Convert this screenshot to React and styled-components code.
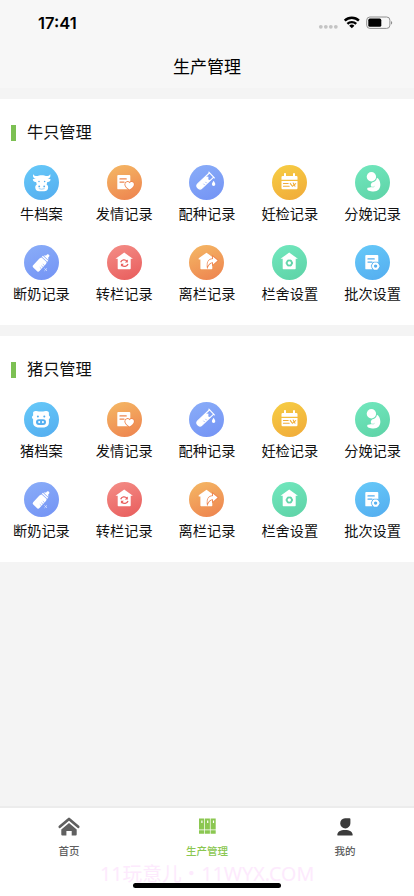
import React from "react";
import styled, { createGlobalStyle } from "styled-components";

const GlobalStyle = createGlobalStyle`
  * { box-sizing: border-box; }
  body { margin: 0; background: #f4f4f4; font-family: "Liberation Sans", "Noto Sans CJK SC", sans-serif; color: #111; }
`;

const Screen = styled.div`
  width: 414px;
  height: 896px;
  display: flex;
  flex-direction: column;
  overflow: hidden;
  background: #f4f4f4;
`;

const Header = styled.header`
  height: 88px;
  flex: none;
  background: #f7f7f7;
`;

const StatusBar = styled.div`
  height: 44px;
  padding: 2px 21px 0 38px;
  display: flex;
  align-items: center;
  justify-content: space-between;
`;

const Clock = styled.span`
  font: 600 16.5px/20px Inter, sans-serif;
  letter-spacing: 0;
  color: #000;
`;

const NavTitle = styled.h1`
  margin: 0;
  height: 44px;
  text-align: center;
  font: 400 17px/43px "Noto Sans CJK SC", sans-serif;
  color: #000;
`;

const Content = styled.main`
  flex: 1;
  padding-top: 11px;
  display: flex;
  flex-direction: column;
  gap: 11px;
`;

const Panel = styled.section`
  height: 226px;
  background: #fff;
  padding-top: 22px;
`;

const PanelTitle = styled.h2`
  margin: 0 0 21px;
  padding-left: 11px;
  height: 23px;
  display: flex;
  align-items: center;
  gap: 11px;
  font: 400 16.2px/23px "Noto Sans CJK SC", sans-serif;
  color: #111;
  &::before {
    content: "";
    width: 5px;
    height: 16px;
    background: #7cc053;
  }
`;

const PanelTitleText = styled.span`
  padding-bottom: 2px;
`;

const Grid = styled.div`
  display: grid;
  grid-template-columns: repeat(5, 1fr);
  grid-auto-rows: 80px;
`;

const Entry = styled.div`
  display: flex;
  flex-direction: column;
  align-items: center;
  gap: 2px;
`;

const Disc = styled.svg`
  width: 35px;
  height: 35px;
  display: block;
`;

const EntryLabel = styled.span`
  font: 400 14.2px/22px "Noto Sans CJK SC", sans-serif;
  white-space: nowrap;
  color: #111;
`;

const TabBar = styled.nav`
  position: relative;
  height: 90px;
  flex: none;
  display: grid;
  grid-template-columns: repeat(3, 1fr);
  background: #fff;
  border-top: 2px solid #ececec;
`;

const Tab = styled.div`
  display: flex;
  flex-direction: column;
  align-items: center;
  padding-top: 7px;
  gap: 6px;
  color: ${(p) => (p.$active ? "#8bc751" : "#606060")};
`;

const TabIcon = styled.svg`
  width: 24px;
  height: 22px;
  display: block;
`;

const TabLabel = styled.span`
  font: 500 10.5px/16px "Noto Sans CJK SC", sans-serif;
`;

const Watermark = styled.div`
  position: absolute;
  left: 100px;
  top: 53px;
  font: 400 19.7px/26px "Noto Sans", "Noto Sans CJK SC", sans-serif;
  white-space: nowrap;
  color: #fdeafd;
`;

const HomeIndicator = styled.div`
  position: absolute;
  left: 133px;
  bottom: 8px;
  width: 148px;
  height: 5px;
  border-radius: 3px;
  background: #000;
`;

const tones = {
  sky: ["#65c7f8", "#55aff0"],
  orange: ["#f4b463", "#ee8650"],
  violet: ["#88abf8", "#7595f5"],
  amber: ["#f6cb43", "#f1ad3a"],
  mint: ["#70e6bc", "#5fd4a8"],
  red: ["#f38a84", "#e9605f"],
};

const Sheet = ({ tone }) => (
  <>
    <path d="M11.2 10h11.2q.9 0 .9.9v13.4H11.2q-.9 0-.9-.9V10.9q0-.9.9-.9z" />
    <path d="M13 13.9h6.2M13 17.1h4" stroke={tone} strokeWidth="1.3" strokeLinecap="round" />
  </>
);

const House = () => (
  <path d="M17.2 7.6l8.7 6.2h-2.2v9.8q0 .7-.7.7H11.4q-.7 0-.7-.7v-9.8H8.5z" />
);

const glyphs = {
  cow: (t) => (
    <>
      <path d="M9.2 8.9c-.7 3 .3 4.4 2.6 4.5L8.8 14.2c.2 2 1.5 3 3.3 2.7l.7 2.6c-1.4.8-1.7 2.2-1.5 3.5.3 2.2 2 3.4 4 3.3h4.9c2 0 3.6-1.1 3.9-3.3.2-1.3-.1-2.7-1.5-3.5l.7-2.6c1.8.3 3.1-.7 3.3-2.7l-3-.8c2.3-.1 3.3-1.5 2.6-4.5-.5 1.8-1.8 2.1-4.4 2.2-.8-.7-2-.9-4.1-.9s-3.3.2-4.1.9c-2.6-.1-3.9-.4-4.4-2.2z" />
      <g fill={t}><circle cx="15" cy="16.6" r=".75" /><circle cx="20.6" cy="16.6" r=".75" /><circle cx="15.2" cy="21.4" r=".9" /><circle cx="20.2" cy="21.4" r=".9" /></g>
      <path d="M14.8 23.6q2.9 1.2 5.8 0" stroke={t} strokeWidth=".55" fill="none" />
    </>
  ),
  pig: (t) => (
    <>
      <path d="M10.6 9.2c2-.3 3.4 0 4.2.3h4.4c.8-.3 2.2-.6 4.2-.3 1.2.2 1.6.8 1.5 2v2.2c1.5.5 1.5 3.2 0 3.6v3.4c0 3.9-2.9 5.2-7.9 5.2s-7.9-1.3-7.9-5.2V17c-1.5-.4-1.5-3.1 0-3.6v-2.2c-.1-1.2.3-1.8 1.5-2z" />
      <g fill={t}><circle cx="13.9" cy="14.4" r="1" /><circle cx="20.3" cy="14.4" r="1" /><rect x="12" y="17.2" width="10" height="5.8" rx="2.9" /></g>
      <g fill="#fff"><circle cx="15.2" cy="20.1" r="1.05" /><circle cx="18.9" cy="20.1" r="1.05" /></g>
    </>
  ),
  heart: (t) => (
    <>
      <Sheet tone={t} />
      <path d="M22.6 24.5c-2.2-1.5-4.3-3.1-4.3-5.1 0-2.8 3.2-3 4.3-1.2 1.1-1.8 4.3-1.6 4.3 1.2 0 2-2.1 3.6-4.3 5.1z" fill={t} stroke={t} strokeWidth="1.8" />
      <path d="M22.6 24.5c-2.2-1.5-4.3-3.1-4.3-5.1 0-2.8 3.2-3 4.3-1.2 1.1-1.8 4.3-1.6 4.3 1.2 0 2-2.1 3.6-4.3 5.1z" />
    </>
  ),
  tube: (t) => (
    <>
      <g transform="translate(16.1 16.1) rotate(47)">
        <path d="M-4-8.9h8M-3-8.6V7a3 3 0 0 0 6 0V-8.6" fill="none" stroke="#fff" strokeWidth="1.15" strokeLinecap="round" />
        <path d="M-3-3.7l2.2-1.7 1.8 2 2-1.2V7a3 3 0 0 1-6 0z" />
        <path d="M.8.3h1.7M.8 3h1.7" stroke={t} strokeWidth=".6" />
      </g>
      <path d="M24.6 15.8c1 1.6 1.7 2.5 1.7 3.5a1.7 1.7 0 0 1-3.4 0c0-1 .7-1.9 1.7-3.5z" />
    </>
  ),
  calendar: (t) => (
    <>
      <path d="M13 8.1c.6 0 1 .4 1 1v1.8h7V9.1a1 1 0 0 1 2 0v1.8h1.3q1.2 0 1.2 1.2v2.7h-16v-2.7q0-1.2 1.2-1.2H12V9.1c0-.6.4-1 1-1zM9.5 16h16v7q0 1.2-1.2 1.2H10.7q-1.2 0-1.2-1.2z" />
      <path d="M11.4 18.5h4.8M11.4 21.2h5.8M18.2 18.4l2.2 2.9 3.3-2.7M21.2 18l1.8 3.3" stroke={t} strokeWidth="1.05" fill="none" strokeLinecap="round" />
    </>
  ),
  baby: (t) => (
    <>
      <circle cx="16.4" cy="11.7" r="4.7" />
      <path d="M22 12.7c2 1.2 3.1 3.5 3.3 6.4.4 4.6-2.4 7.5-6.9 7.4-3.4 0-6.2-1-6.2-2.5 0-2 3.2-1.1 4.7-1.9-1.7-1.3-1.3-4.2.9-4.9 1.7-.6 3.5-1.3 4.2-4.5z" />
      <path d="M16.8 21.8c1.1.5 2.2.2 2.8-.6" stroke={t} strokeWidth=".45" fill="none" />
    </>
  ),
  bottle: (t) => (
    <>
      <g transform="translate(16.8 18.3) rotate(43)">
        <path d="M-1.5-10.4c0-2 3-2 3 0v1.1l1.7 1.7h-6.4l1.7-1.7zM-3.7-7h7.4v1.5h-7.4zM-3.4-4.9h6.8c.8 1.2.9 2 .9 3v8.5q0 1.6-1.6 1.6h-5.4q-1.6 0-1.6-1.6v-8.5c0-1 .1-1.8.9-3z" />
        <path d="M2-.8h2.3M2 1.4h2.3M2 3.6h2.3" stroke={t} strokeWidth=".55" />
      </g>
      <path d="M20.4 23.3l2.6 2.6m0-2.6l-2.6 2.6" stroke="#dce6ff" strokeWidth=".8" />
    </>
  ),
  turn: (t) => (
    <>
      <House />
      <path d="M13.7 17.2c.9-2.5 4.1-3.3 6.4-1M21 19c-.9 2.5-4.1 3.3-6.4 1" fill="none" stroke={t} strokeWidth="1.35" />
      <path d="M20.8 14.4v3h-3zM13.9 21.8v-3h3z" fill={t} />
    </>
  ),
  leave: (t) => (
    <>
      <path d="M17.5 7.7l7.2 5.2h-1.4v10.7q0 .7-.7.7H12.1q-.7 0-.7-.7v-9.2H9.7v-1.2z" />
      <path d="M18.6 21.2c-.6-4.6 1.8-7 5.4-7.1v-2.4l4.6 3.9-4.6 3.8v-2.2c-2.3 0-4 1.2-5.4 4z" fill={t} stroke={t} strokeWidth="1.8" />
      <path d="M18.6 21.2c-.6-4.6 1.8-7 5.4-7.1v-2.4l4.6 3.9-4.6 3.8v-2.2c-2.3 0-4 1.2-5.4 4z" />
    </>
  ),
  pen: (t) => (
    <>
      <House />
      <path d="M13.9 18l1.7-3h3.5l1.7 3-1.7 3h-3.5z" fill={t} stroke={t} strokeWidth=".8" strokeLinejoin="round" />
      <circle cx="17.3" cy="18" r="1.7" />
    </>
  ),
  batch: (t) => (
    <>
      <Sheet tone={t} />
      <path d="M16.9 21.1l1.8-3.3h3.8l1.8 3.3-1.8 3.4h-3.8z" fill={t} stroke={t} strokeWidth="2.2" strokeLinejoin="round" />
      <path d="M17 21.1l1.8-3.1h3.6l1.8 3.1-1.8 3.1h-3.6z" fill="#fff" stroke="#fff" strokeWidth="1" strokeLinejoin="round" />
      <circle cx="20.6" cy="21.1" r="1.7" fill={t} />
    </>
  ),
};

const records = [
  ["发情记录", "heart", "orange"],
  ["配种记录", "tube", "violet"],
  ["妊检记录", "calendar", "amber"],
  ["分娩记录", "baby", "mint"],
  ["断奶记录", "bottle", "violet"],
  ["转栏记录", "turn", "red"],
  ["离栏记录", "leave", "orange"],
  ["栏舍设置", "pen", "mint"],
  ["批次设置", "batch", "sky"],
];

const panels = [
  { title: "牛只管理", entries: [["牛档案", "cow", "sky"], ...records] },
  { title: "猪只管理", entries: [["猪档案", "pig", "sky"], ...records] },
];

function EntryIcon({ glyph, tone, id }) {
  const [from, to] = tones[tone];
  return (
    <Disc viewBox="0 0 35 35" fill="#fff">
      <defs>
        <linearGradient id={id} x1="0.3" y1="0" x2="0.7" y2="1">
          <stop offset="0" stopColor={from} />
          <stop offset="1" stopColor={to} />
        </linearGradient>
      </defs>
      <circle cx="17.5" cy="17.5" r="17.5" fill={`url(#${id})`} />
      {glyphs[glyph](to)}
    </Disc>
  );
}

const StatusIcons = () => (
  <svg width="75" height="18" viewBox="318 14 75 18">
    <g fill="#c4c4c4">
      <circle cx="320.8" cy="26.8" r="1.9" /><circle cx="325.8" cy="26.8" r="1.9" /><circle cx="330.8" cy="26.8" r="1.9" /><circle cx="335.8" cy="26.8" r="1.9" />
    </g>
    <g fill="none" stroke="#000" strokeWidth="2.4">
      <path d="M344.7 20.7a10.2 10.2 0 0 1 14.2 0" />
      <path d="M347.4 23.9a6.3 6.3 0 0 1 8.8 0" />
    </g>
    <path d="M349.2 25.7a3.7 3.7 0 0 1 5.2 0l-2.6 2.6z" />
    <rect x="366.7" y="17" width="23.2" height="11.4" rx="3.2" fill="none" stroke="#8e8e8e" />
    <path d="M391 20.9c1.6.5 1.6 3.1 0 3.6z" fill="#8e8e8e" />
    <rect x="368.3" y="18.6" width="13" height="8.2" rx="1.6" />
  </svg>
);

const tabs = [
  {
    label: "首页",
    icon: (
      <>
        <path d="M2.8 11.8L12 3.9l9.2 7.9" fill="none" stroke="#606060" strokeWidth="2.7" strokeLinecap="round" strokeLinejoin="round" />
        <path d="M12 7.9l7.7 6.5v5q0 1-1 1h-4v-4.3H9.4v4.3H5.3q-1 0-1-1v-5z" />
      </>
    ),
  },
  {
    label: "生产管理",
    active: true,
    icon: (
      <>
        <path d="M4 3.6h5.1v10.8H4zM9.8 3.6h5.1v10.8H9.8zM15.6 3.6h5.1v10.8h-5.1zM4 15.3h5.1v3.4H4zM9.8 15.3h5.1v3.4H9.8zM15.6 15.3h5.1v3.4h-5.1z" />
        <path d="M6.9 5.6v2.4M12.7 5.6v2.4M18.5 5.6v2.4" stroke="#fff" strokeWidth="1.2" />
      </>
    ),
  },
  {
    label: "我的",
    icon: (
      <g fill="#3b3b3b">
        <path d="M12 3.2h4.5q.9 0 .9.9v4.2A5.1 5.1 0 1 1 12 3.2z" />
        <path d="M4.3 20.1c0-3.3 3-5.2 7.7-5.2s7.7 1.9 7.7 5.2q0 .3-.4.3H4.7q-.4 0-.4-.3z" />
      </g>
    ),
  },
];

export default function App() {
  return (
    <>
      <GlobalStyle />
      <Screen>
        <Header>
          <StatusBar>
            <Clock>17:41</Clock>
            <StatusIcons />
          </StatusBar>
          <NavTitle>生产管理</NavTitle>
        </Header>
        <Content>
          {panels.map((panel, p) => (
            <Panel key={panel.title}>
              <PanelTitle>
                <PanelTitleText>{panel.title}</PanelTitleText>
              </PanelTitle>
              <Grid>
                {panel.entries.map(([label, glyph, tone]) => (
                  <Entry key={label}>
                    <EntryIcon glyph={glyph} tone={tone} id={`disc-${p}-${glyph}`} />
                    <EntryLabel>{label}</EntryLabel>
                  </Entry>
                ))}
              </Grid>
            </Panel>
          ))}
        </Content>
        <TabBar>
          <Watermark>11玩意儿・11WYX.COM</Watermark>
          {tabs.map((tab) => (
            <Tab key={tab.label} $active={tab.active}>
              <TabIcon viewBox="0 0 24 22" fill="currentColor">{tab.icon}</TabIcon>
              <TabLabel>{tab.label}</TabLabel>
            </Tab>
          ))}
          <HomeIndicator />
        </TabBar>
      </Screen>
    </>
  );
}
